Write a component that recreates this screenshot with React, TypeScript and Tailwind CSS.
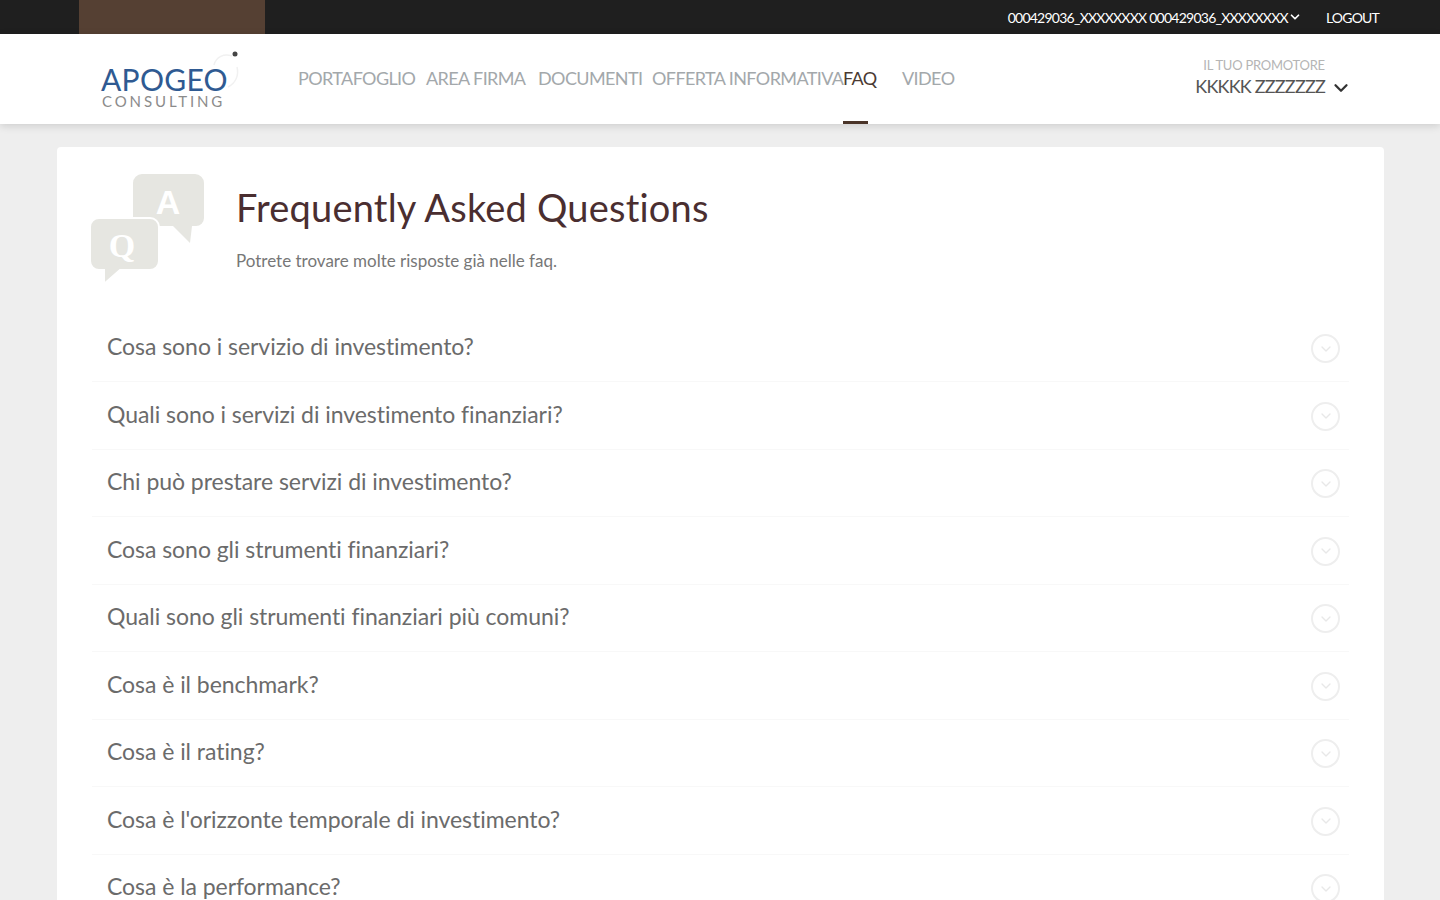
import { ChevronDown } from "lucide-react";

const questions = [
  "Cosa sono i servizio di investimento?",
  "Quali sono i servizi di investimento finanziari?",
  "Chi può prestare servizi di investimento?",
  "Cosa sono gli strumenti finanziari?",
  "Quali sono gli strumenti finanziari più comuni?",
  "Cosa è il benchmark?",
  "Cosa è il rating?",
  "Cosa è l'orizzonte temporale di investimento?",
  "Cosa è la performance?",
];

const TopBar = () => (
  <div className="flex h-[34px] shrink-0 items-center bg-[#1f1f1f] pl-[79px] pr-[61px] text-white">
    <div className="h-full w-[186px] bg-[#554033]" />
    <div className="ml-auto flex items-center text-[14px] tracking-[-0.75px]">
      <span>000429036_XXXXXXXX 000429036_XXXXXXXX</span>
      <ChevronDown size={14} strokeWidth={3} />
    </div>
    <span className="ml-[24px] text-[14px] tracking-[-0.8px]">LOGOUT</span>
  </div>
);

const Logo = () => (
  <div className="relative h-[62px] w-[140px]">
    <svg className="absolute left-[105px] top-0" width="36" height="42" viewBox="0 0 36 42" fill="none">
      <path d="M8 14 C10 6 18 2 26 5 M31 16 C33 24 30 32 22 36" stroke="#f1f1f1" strokeWidth="1.5" />
      <circle cx="29" cy="3" r="2.5" fill="#444444" />
    </svg>
    <div className="absolute left-0 top-[13px] text-[30px] leading-[30px] tracking-[0.3px] text-[#2f5a92]">
      APOGEO
    </div>
    <div className="absolute left-[1px] top-[43px] text-[15px] leading-[15px] tracking-[2.9px] text-[#8b8b8b]">
      CONSULTING
    </div>
  </div>
);

const navItems = [
  { label: "PORTAFOGLIO", width: "w-[128px]" },
  { label: "AREA FIRMA", width: "w-[112px]" },
  { label: "DOCUMENTI", width: "w-[114px]" },
  { label: "OFFERTA INFORMATIVA", width: "w-[191px]" },
];

const NavBar = () => (
  <div className="relative z-10 flex h-[90px] shrink-0 bg-white pl-[101px] pr-[88px] shadow-[0_2px_8px_rgba(0,0,0,0.14)]">
    <div className="pt-[17px]">
      <Logo />
    </div>
    <nav className="ml-[57px] flex h-full text-[18px] tracking-[-0.6px] text-[#a3a8ab]">
      {navItems.map((item) => (
        <div key={item.label} className={`${item.width} whitespace-nowrap pt-[31px]`}>
          {item.label}
        </div>
      ))}
      <div className="relative w-[59px] pt-[31px] text-[#4a3a32]">
        FAQ
        <div className="absolute bottom-0 left-0 h-[3px] w-[25px] bg-[#4a3428]" />
      </div>
      <div className="pt-[31px]">VIDEO</div>
    </nav>
    <div className="ml-auto flex flex-col items-start pt-[24px]">
      <div className="ml-[8px] text-[13px] leading-[15px] tracking-[-0.25px] text-[#b5b5b5]">IL TUO PROMOTORE</div>
      <div className="flex items-center text-[18px] leading-[26px] tracking-[-0.8px] text-[#555555]">
        KKKKK ZZZZZZZ
        <ChevronDown className="ml-[5px] mt-[3px] text-[#333333]" size={22} strokeWidth={2.5} />
      </div>
    </div>
  </div>
);

const QaIcon = () => (
  <svg width="116" height="112" viewBox="0 0 116 112" className="-ml-[2px] shrink-0">
    <path
      d="M52 0 H105 a9 9 0 0 1 9 9 V44 a8 8 0 0 1 -8 8 H102 L100 69 L83 52 H52 a9 9 0 0 1 -9 -9 V9 a9 9 0 0 1 9 -9 Z"
      fill="#e6e6e1"
    />
    <path
      d="M9 44 H60 a9 9 0 0 1 9 9 V87 a9 9 0 0 1 -9 9 H30 L14 110 L14 96 H9 a9 9 0 0 1 -9 -9 V53 a9 9 0 0 1 9 -9 Z"
      fill="#e6e6e1"
      stroke="#ffffff"
      strokeWidth="2"
    />
    <text x="78" y="40" textAnchor="middle" fontSize="34" fontWeight="700" fill="#ffffff" fontFamily="'Liberation Sans', sans-serif">
      A
    </text>
    <text x="32" y="83" textAnchor="middle" fontSize="34" fontWeight="700" fill="#ffffff" fontFamily="'Liberation Serif', serif">
      Q
    </text>
  </svg>
);

const FaqRow = ({ text }: { text: string }) => (
  <div className="flex h-[67.5px] shrink-0 items-center justify-between border-b border-[#f8f8f8] pl-[15px] pr-[9px]">
    <span className="-mt-[3px] text-[23px] tracking-[-0.05px] text-[#6b6b6b]">{text}</span>
    <span className="mt-[2px] flex h-[29px] w-[29px] items-center justify-center rounded-full border-2 border-[#eeeeee] text-[#e8e8e8]">
      <ChevronDown size={16} strokeWidth={2} />
    </span>
  </div>
);

export default function App() {
  return (
    <div
      className="flex h-screen flex-col overflow-hidden bg-[#eeeeee]"
      style={{ fontFamily: "Lato, 'Noto Sans', sans-serif" }}
    >
      <TopBar />
      <NavBar />
      <main className="ml-[57px] mr-[56px] mt-[23px] flex-1 rounded-t-[4px] bg-white pl-[35px] pr-[35px]">
        <div className="flex h-[167.5px] items-start pt-[27px]">
          <QaIcon />
          <div className="ml-[30px]">
            <h1 className="pt-[5px] text-[38px] leading-[56px] tracking-[0.2px] text-[#4a2e30]">
              Frequently Asked Questions
            </h1>
            <p className="mt-[14px] text-[17px] leading-[24px] text-[#777777]">
              Potrete trovare molte risposte già nelle faq.
            </p>
          </div>
        </div>
        <div className="flex flex-col">
          {questions.map((q) => (
            <FaqRow key={q} text={q} />
          ))}
        </div>
      </main>
    </div>
  );
}
